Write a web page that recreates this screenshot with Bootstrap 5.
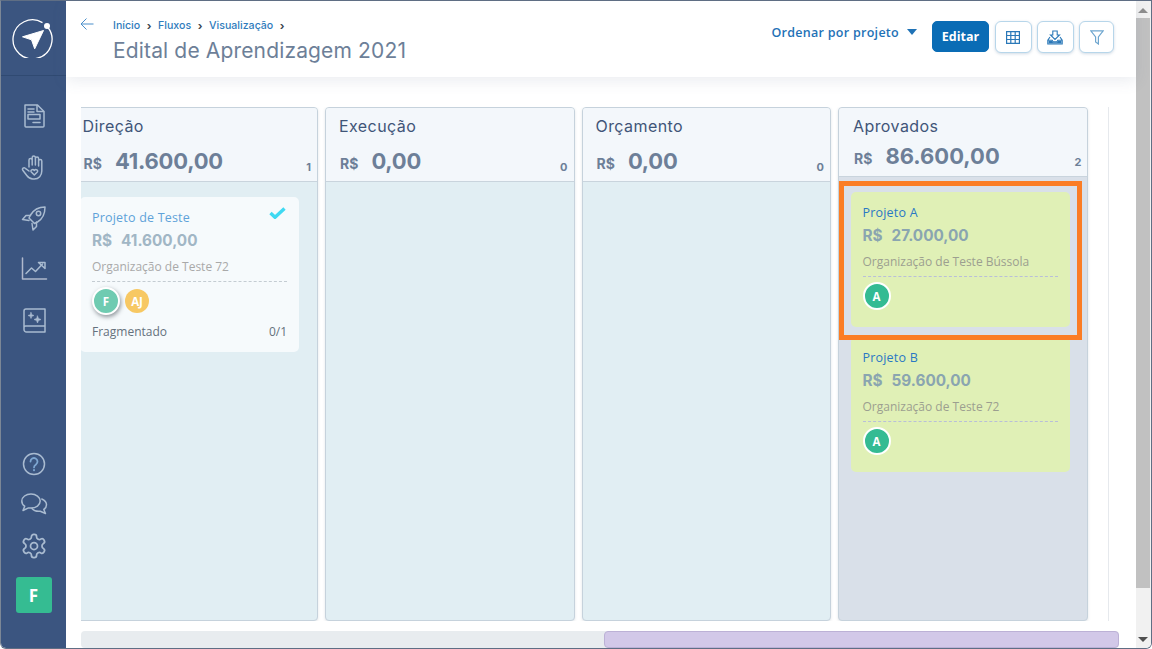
<!DOCTYPE html>
<html lang="pt-BR">
<head>
<meta charset="utf-8">
<title>Edital de Aprendizagem 2021</title>
<link href="https://cdn.jsdelivr.net/npm/bootstrap@5.3.0/dist/css/bootstrap.min.css" rel="stylesheet">
<style>
html,body{height:649px;overflow:hidden;background:#fff}
body{font-family:"Open Sans","Noto Sans",sans-serif}
.frame{width:1152px;height:649px;border:1px solid #5f6e84;border-left-color:#7c8796;border-radius:0 0 6px 6px;overflow:hidden;background:#fff}
.side{width:65px;background:#3b5580;flex:none}
.logo-box{height:75px;border-bottom:1px solid #304a72;padding:15px 0 0 10px;flex:none}
.nav-stack{padding-top:26px;gap:23px}
.nav-stack svg,.nav-low svg{display:block;fill:none;stroke:#a9bbd0;stroke-width:1.5;stroke-linecap:round;stroke-linejoin:round}
.nav-low{gap:14px;padding-bottom:35px}
.nav-low svg:first-child{margin-bottom:-1px;transform:translateY(1px)}
.user-tile{width:36px;height:36px;background:#35bc92;color:#fff;border-radius:3px;font:700 17px "Open Sans",sans-serif;margin-top:3px}
.main-area{min-width:0}
.topbar{height:76px;flex:none;box-shadow:0 4px 14px rgba(90,110,140,.12);padding:0 22px 0 14px;position:relative;z-index:2}
.crumbs{font:500 10.6px "Inter",sans-serif;color:#2f7cbc;gap:6.6px;padding:17px 0 0 1px;line-height:16px}
.crumbs b{color:#3d4650;font-size:11px;font-weight:700}
.page-title{font:400 21px "Inter",sans-serif;color:#6d7f98;letter-spacing:.15px;margin:3px 0 0 1px;line-height:28px}
.sort-link{font:600 12.5px "Open Sans",sans-serif;letter-spacing:.28px;color:#1f72b6;margin:3px 15px 0 0}
.caret-down{width:0;height:0;border:5.5px solid transparent;border-top:6px solid #1f72b6;border-bottom:0;margin:-2px 0 0 8px}
.edit-btn{height:31px;width:57px;padding:0;background:#0a6cb5;border-color:#0a6cb5;color:#fff;font:700 12.5px "Open Sans",sans-serif;border-radius:5px;margin-right:5.5px}
.tool-row{gap:5.5px}
.tool-btn{height:32px;background:#fff;border:1px solid #b7d6ea;border-radius:6px;box-shadow:0 1px 3px rgba(70,110,150,.25);padding:0;display:flex;align-items:center;justify-content:center}
.tool-btn svg{fill:none;stroke:#2a78b8;stroke-width:1.2}
.board-zone{padding:30px 0 0 15px;flex:1;min-height:0}
.board-clip{width:1028px;height:514px;overflow:hidden;border-right:1px solid #e6e9ed;flex:none}
.track{margin-left:-12.5px;gap:7px;height:514px}
.lane{width:249.5px;flex:none;height:514px;border:1px solid #c6d2dc;border-radius:4px;background:#e1eef3;box-shadow:0 1px 3px rgba(90,110,130,.18);overflow:hidden;position:relative}
.lane-head{height:74px;background:#f3f7fb;border-bottom:1px solid #c9d4dd;padding:6px 5px 0 13px;flex:none}
.lane-name{font:400 16px "Inter",sans-serif;color:#3f5578;letter-spacing:.42px;line-height:24px}
.lane-sum{font:700 22px "Inter",sans-serif;color:#6d7f98;letter-spacing:-.2px;line-height:30px;margin-top:8px}
.lane-sum small{font-size:14px;font-weight:700;margin:0 13px 0 1px;letter-spacing:0}
.lane-count{font:700 11px "Inter",sans-serif;color:#6d7f98;position:absolute;right:6px;top:52px}
.lane-blue .lane-head{height:69px;padding-left:14px}
.lane-blue .lane-sum{margin-top:3px;letter-spacing:0}
.lane-blue .lane-count{top:47px;right:5px}
.lane-blue{background:#d9e0e9}
.lane-body{padding:15px 0 0 11.5px}
.lane-first{padding-left:10.5px}
.lane-blue .lane-body{padding-top:15px;gap:10px}
.task{width:219px;border-radius:5px;padding:11px 12px 0;position:relative}
.task-pale{background:#f6fafc;height:155px}
.task-lime{background:#e0f0b6;height:135px}
.task-name{font:400 12.5px "Open Sans",sans-serif;line-height:20px;letter-spacing:.2px}
.task-pale .task-name{color:#5fa2d9}
.task-lime .task-name{color:#2a78c4}
.task-sum{font:700 15.3px "Inter",sans-serif;line-height:20px;margin-top:3px}
.task-pale .task-sum{color:#a1b6c5}
.task-lime .task-sum{color:#8aa5b0}
.task-sum span{margin-right:9px}
.task-org{font:400 12px "Open Sans",sans-serif;line-height:18px;margin-top:7px;color:#a9a9a9;padding-bottom:5px;border-bottom:1px dashed #c4ccd2}
.task-lime .task-org{color:#9c9f90;border-bottom-color:#b9bfd8}
.avatars{gap:5px;margin-top:5px;height:28px;align-items:center}
.face{border-radius:50%;color:#fff;font:700 11.5px "Open Sans",sans-serif;display:flex;align-items:center;justify-content:center}
.face-ring{width:28px;height:28px;background:#34bb93;border:2px solid #fff}
.face-soft{background:#6fcbb1;box-shadow:1px 2px 4px rgba(40,50,60,.5)}
.face-plain{width:24px;height:24px;background:#f7c863}
.task-foot{font:400 12px "Open Sans",sans-serif;color:#65717d;margin-top:9px;line-height:16px}
.task-check{position:absolute;right:13px;top:10px}
.mark-box{position:absolute;left:0;top:73px;width:243px;height:159px;border:5px solid #fb7d25;pointer-events:none}
.hbar{margin:10px 0 0 0;width:1038px;height:17px;background:#e8ecef;border-radius:4px;flex:none}
.hthumb{width:515px;background:#d2c8e8;border:1px solid #bcb1d6;border-radius:4px}
.vbar{width:15px;background:#f1f1f1;flex:none;padding:0}
.vthumb{flex:1;background:#c1c1c1;margin:17px 1px 0 0;max-height:570px}
.arrow-up{width:0;height:0;border:5px solid transparent;border-bottom:5px solid #8d8d8d;border-top:0;position:absolute;left:2px;top:7px}
.arrow-down{width:0;height:0;border:5px solid transparent;border-top:5px solid #505050;border-bottom:0;position:absolute;left:2px;bottom:6px}
</style>
</head>
<body class="m-0">
<div class="frame d-flex">
  <aside class="side d-flex flex-column">
    <div class="logo-box">
      <svg width="42" height="42" viewBox="0 0 42 42">
        <path d="M31.5 6.6A19.5 19.5 0 1 0 37 11.5" fill="none" stroke="#fff" stroke-width="1.3"/>
        <circle cx="36" cy="10" r="3" fill="#fff"/>
        <path d="M32.5 14.5 11.5 20.8l9 3 3.2 9z" fill="#fff" stroke="#fff" stroke-width="1" stroke-linejoin="round"/>
      </svg>
    </div>
    <div class="nav-stack d-flex flex-column align-items-center">
      <svg width="28" height="28" viewBox="0 0 28 28"><path d="M5 3h12.500L24 9.500V24a1 1 0 0 1-1 1H6a1 1 0 0 1-1-1z"/><path d="M17 3.500V9.500h6.500M8 7h6M8 10h6M13 20.500h7"/><rect x="8" y="12.500" width="12" height="4.500"/></svg>
      <svg width="28" height="28" viewBox="0 0 28 28"><path d="M9 14V7a1.600 1.600 0 0 1 3.200 0v5V4.600a1.600 1.600 0 0 1 3.200 0V12 5.600a1.600 1.600 0 0 1 3.200 0V13 8a1.600 1.600 0 0 1 3.200 0v10c0 4.500-3 8-7.500 8h-1.500c-3 0-4.500-1.500-6-3.500l-4-5.200c-1.200-1.600 1-3.400 2.500-2L9 18"/><path d="M14.300 22l-3-3c-1.300-1.700 1.500-3.500 3-1.500 1.500-2 4.300-.2 3 1.500z"/></svg>
      <svg width="28" height="28" viewBox="0 0 28 28"><path d="M25 3c-6.500 0-11.500 3-14.500 8L9 14l5.500 5.500 3-1.500c5-3 7.500-8.500 7.500-15z"/><circle cx="18.500" cy="9.500" r="2.200"/><path d="M10.500 11.500H6L2.500 15.500l6.500 1M16.500 18v4.500L13 26l-1-6.500"/></svg>
      <svg width="28" height="28" viewBox="0 0 28 28"><path d="M2.500 3v21h24" stroke="#b0b9cc"/><path d="M6 18.500l5.500-5.500 4 3.500 7-7.500"/><path d="M18.500 7.500h6.500v6z"/></svg>
      <svg width="28" height="28" viewBox="0 0 28 28"><path d="M4 22V5a2 2 0 0 1 2-2h19v23H6.500A2.500 2.500 0 0 1 4 23.500V21.500A1.500 1.500 0 0 1 5.500 20H25"/><path d="M11 6.500l.8 2.200 2.200.8-2.200.8-.8 2.200-.8-2.200-2.200-.8 2.200-.8zM17.500 10l1 2.500 2.500 1-2.500 1-1 2.500-1-2.500-2.500-1 2.500-1z" fill="#a9bbd0" stroke-width=".6"/></svg>
    </div>
    <div class="nav-low mt-auto d-flex flex-column align-items-center">
      <svg width="28" height="28" viewBox="0 0 28 28"><circle cx="14" cy="14" r="10.500"/><path d="M10.500 11.500a3.500 3.500 0 1 1 5.500 2.900c-1.300.9-2 1.400-2 3" stroke="#7ea7d2" stroke-width="1.800"/><path d="M14 20v.3" stroke="#7ea7d2" stroke-width="2"/></svg>
      <svg width="28" height="28" viewBox="0 0 28 28"><path d="M11 4C6 4 1.800 7 1.800 11c0 2.200 1.100 4 2.900 5.200L3 20.500l5.500-2.600c.8.100 1.600.2 2.500.2 5 0 9.200-3 9.200-7S16 4 11 4z"/><path d="M21.800 9c2.800 1.200 4.700 3.300 4.700 5.800 0 1.900-1 3.600-2.700 4.700l1.700 4-5.200-2.300c-3.300.4-6.600-.5-8.300-2.700"/></svg>
      <svg width="28" height="28" viewBox="0 0 24 24"><path d="M12.220 2h-.44a2 2 0 0 0-2 2v.18a2 2 0 0 1-1 1.730l-.43.250a2 2 0 0 1-2 0l-.15-.08a2 2 0 0 0-2.730.730l-.22.380a2 2 0 0 0 .730 2.730l.15.100a2 2 0 0 1 1 1.720v.510a2 2 0 0 1-1 1.740l-.15.090a2 2 0 0 0-.730 2.730l.22.380a2 2 0 0 0 2.730.730l.15-.08a2 2 0 0 1 2 0l.43.250a2 2 0 0 1 1 1.730V20a2 2 0 0 0 2 2h.44a2 2 0 0 0 2-2v-.18a2 2 0 0 1 1-1.730l.43-.25a2 2 0 0 1 2 0l.15.08a2 2 0 0 0 2.730-.730l.22-.39a2 2 0 0 0-.730-2.730l-.15-.08a2 2 0 0 1-1-1.740v-.5a2 2 0 0 1 1-1.740l.15-.09a2 2 0 0 0 .730-2.730l-.22-.38a2 2 0 0 0-2.730-.730l-.15.080a2 2 0 0 1-2 0l-.43-.25a2 2 0 0 1-1-1.730V4a2 2 0 0 0-2-2z"/><circle cx="12" cy="12" r="3"/></svg>
      <div class="user-tile d-flex align-items-center justify-content-center">F</div>
    </div>
  </aside>

  <div class="main-area flex-grow-1 d-flex flex-column">
    <header class="topbar d-flex">
      <svg width="14" height="14" viewBox="0 0 14 14" style="margin:16px 18px 0 0;flex:none"><path d="M13.500 7H1M6.500 1.500 1 7l5.500 5.500" fill="none" stroke="#4a8fcb" stroke-width="1"/></svg>
      <div>
        <div class="crumbs d-flex align-items-center"><span>Início</span><b>›</b><span>Fluxos</span><b>›</b><span>Visualização</span><b>›</b></div>
        <h1 class="page-title">Edital de Aprendizagem 2021</h1>
      </div>
      <div class="ms-auto d-flex align-items-start align-self-start" style="margin-top:20px">
        <span class="sort-link d-flex align-items-center">Ordenar por projeto<span class="caret-down"></span></span>
        <button class="btn edit-btn">Editar</button>
        <div class="d-flex tool-row">
          <button class="tool-btn" style="width:37px"><svg width="14" height="13" viewBox="0 0 14 13"><path d="M.6.6h12.800v11.800H.6zM.6 4.500h12.800M.6 8.500h12.800M4.800.6v11.800M9.200.6v11.800"/></svg></button>
          <button class="tool-btn" style="width:36.5px"><svg width="16" height="15" viewBox="0 0 16 15"><path d="M5.800 1h4.400v4h2.300L8 9.500 3.500 5h2.300zM3 7 .8 10.200v3.800h14.400v-3.800L13 7M.8 10.200h4.400l.8 1.600h4l.8-1.600h4.400" stroke-width="1.100"/><path d="M1.500 11h3.500l.8 1.300h4.400l.8-1.300h3.500v2.500h-13z" fill="#2a78b8" stroke="none"/></svg></button>
          <button class="tool-btn" style="width:35px"><svg width="14" height="15" viewBox="0 0 14 15"><path d="M.8.8h12.400L8.400 7v7L5.600 12V7z" stroke="#6ea6cf"/></svg></button>
        </div>
      </div>
    </header>

    <div class="board-zone d-flex flex-column">
      <div class="board-clip">
        <div class="track d-flex">
          <section class="lane d-flex flex-column">
            <div class="lane-head">
              <div class="lane-name">Direção</div>
              <div class="lane-sum"><small>R$</small>41.600,00</div>
              <span class="lane-count">1</span>
            </div>
            <div class="lane-body lane-first">
              <article class="task task-pale">
                <svg class="task-check" width="17" height="12" viewBox="0 0 17 12"><path d="M1.500 6 6 10.300 15.500 1.500" fill="none" stroke="#3fd9f2" stroke-width="3.400"/></svg>
                <div class="task-name">Projeto de Teste</div>
                <div class="task-sum"><span>R$</span>41.600,00</div>
                <div class="task-org">Organização de Teste 72</div>
                <div class="avatars d-flex">
                  <span class="face face-ring face-soft">F</span>
                  <span class="face face-plain">AJ</span>
                </div>
                <div class="task-foot d-flex justify-content-between"><span>Fragmentado</span><span>0/1</span></div>
              </article>
            </div>
          </section>
          <section class="lane d-flex flex-column">
            <div class="lane-head">
              <div class="lane-name">Execução</div>
              <div class="lane-sum"><small>R$</small>0,00</div>
              <span class="lane-count">0</span>
            </div>
          </section>
          <section class="lane d-flex flex-column">
            <div class="lane-head">
              <div class="lane-name">Orçamento</div>
              <div class="lane-sum"><small>R$</small>0,00</div>
              <span class="lane-count">0</span>
            </div>
          </section>
          <section class="lane lane-blue d-flex flex-column">
            <div class="lane-head">
              <div class="lane-name">Aprovados</div>
              <div class="lane-sum"><small>R$</small>86.600,00</div>
              <span class="lane-count">2</span>
            </div>
            <div class="lane-body d-flex flex-column">
              <article class="task task-lime">
                <div class="task-name">Projeto A</div>
                <div class="task-sum"><span>R$</span>27.000,00</div>
                <div class="task-org">Organização de Teste Bússola</div>
                <div class="avatars d-flex"><span class="face face-ring">A</span></div>
              </article>
              <article class="task task-lime">
                <div class="task-name">Projeto B</div>
                <div class="task-sum"><span>R$</span>59.600,00</div>
                <div class="task-org">Organização de Teste 72</div>
                <div class="avatars d-flex"><span class="face face-ring">A</span></div>
              </article>
            </div>
            <div class="mark-box"></div>
          </section>
        </div>
      </div>
      <div class="hbar d-flex justify-content-end"><div class="hthumb"></div></div>
    </div>
  </div>

  <div class="vbar d-flex flex-column position-relative">
    <span class="arrow-up"></span>
    <div class="vthumb"></div>
    <span class="arrow-down"></span>
  </div>
</div>
<script src="https://cdn.jsdelivr.net/npm/bootstrap@5.3.0/dist/js/bootstrap.bundle.min.js"></script>
</body>
</html>
